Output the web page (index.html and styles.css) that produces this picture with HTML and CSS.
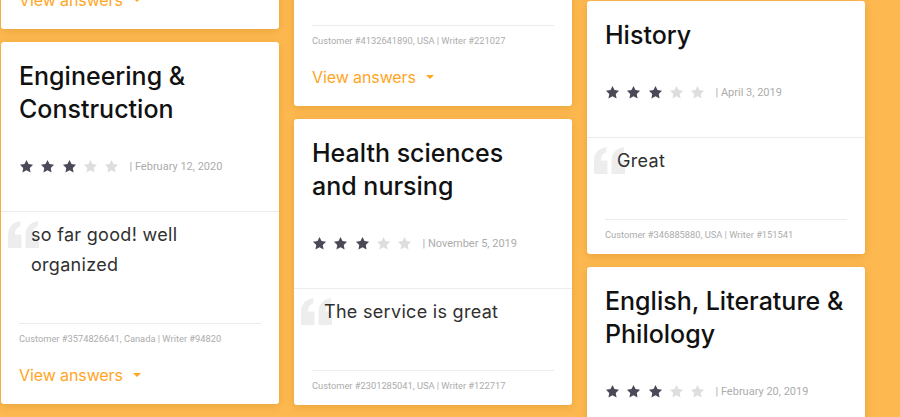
FILE: index.html
```html
<!DOCTYPE html>
<html lang="en">
<head>
<meta charset="utf-8">
<title>Reviews</title>
<link rel="stylesheet" href="styles.css">
</head>
<body>
<svg width="0" height="0" class="defs" aria-hidden="true">
  <defs>
    <symbol id="star" viewBox="0 0 24 24"><path d="M12 1.5l3.2 6.6 7.3 1-5.3 5.1 1.3 7.2L12 18l-6.5 3.4 1.3-7.2L1.5 9.1l7.3-1z"/></symbol>
    <symbol id="quote" viewBox="0 0 30 26"><path d="M0 26V14C0 6 4 1.5 12 0v5C8.5 6 6.8 9 6.8 13H13v13z M17 26V14c0-8 4-12.5 12-14v5c-3.5 1-5.2 4-5.2 8H30v13z"/></symbol>
  </defs>
</svg>
<main class="board">
  <section class="col col-1">
    <article class="card">
      <div class="card-head">
        <h3 class="title">Business Studies</h3>
        <div class="rating">
          <svg class="star on"><use href="#star"/></svg><svg class="star on"><use href="#star"/></svg><svg class="star on"><use href="#star"/></svg><svg class="star"><use href="#star"/></svg><svg class="star"><use href="#star"/></svg>
          <span class="date">| March 2, 2020</span>
        </div>
      </div>
      <div class="card-review">
        <svg class="qmark"><use href="#quote"/></svg>
        <p>Good job</p>
      </div>
      <div class="card-foot">
        <p class="meta">Customer #1200341200, USA | Writer #100201</p>
        <a class="view" href="#">View answers <span class="caret"></span></a>
      </div>
    </article>
    <article class="card">
      <div class="card-head">
        <h3 class="title">Engineering &amp; Construction</h3>
        <div class="rating">
          <svg class="star on"><use href="#star"/></svg><svg class="star on"><use href="#star"/></svg><svg class="star on"><use href="#star"/></svg><svg class="star"><use href="#star"/></svg><svg class="star"><use href="#star"/></svg>
          <span class="date">| February 12, 2020</span>
        </div>
      </div>
      <div class="card-review">
        <svg class="qmark"><use href="#quote"/></svg>
        <p>so far good! well organized</p>
      </div>
      <div class="card-foot">
        <p class="meta">Customer #3574826641, Canada | Writer #94820</p>
        <a class="view" href="#">View answers <span class="caret"></span></a>
      </div>
    </article>
  </section>

  <section class="col col-2">
    <article class="card">
      <div class="card-head">
        <h3 class="title">Economics</h3>
        <div class="rating">
          <svg class="star on"><use href="#star"/></svg><svg class="star on"><use href="#star"/></svg><svg class="star on"><use href="#star"/></svg><svg class="star"><use href="#star"/></svg><svg class="star"><use href="#star"/></svg>
          <span class="date">| January 8, 2020</span>
        </div>
      </div>
      <div class="card-review">
        <svg class="qmark"><use href="#quote"/></svg>
        <p>Nice work</p>
      </div>
      <div class="card-foot">
        <p class="meta">Customer #4132641890, USA | Writer #221027</p>
        <a class="view" href="#">View answers <span class="caret"></span></a>
      </div>
    </article>
    <article class="card">
      <div class="card-head">
        <h3 class="title">Health sciences <span class="nowrap">and nursing</span></h3>
        <div class="rating">
          <svg class="star on"><use href="#star"/></svg><svg class="star on"><use href="#star"/></svg><svg class="star on"><use href="#star"/></svg><svg class="star"><use href="#star"/></svg><svg class="star"><use href="#star"/></svg>
          <span class="date">| November 5, 2019</span>
        </div>
      </div>
      <div class="card-review">
        <svg class="qmark"><use href="#quote"/></svg>
        <p>The service is great</p>
      </div>
      <div class="card-foot">
        <p class="meta">Customer #2301285041, USA | Writer #122717</p>
      </div>
    </article>
  </section>

  <section class="col col-3">
    <article class="card">
      <div class="card-head">
        <h3 class="title">History</h3>
        <div class="rating">
          <svg class="star on"><use href="#star"/></svg><svg class="star on"><use href="#star"/></svg><svg class="star on"><use href="#star"/></svg><svg class="star"><use href="#star"/></svg><svg class="star"><use href="#star"/></svg>
          <span class="date">| April 3, 2019</span>
        </div>
      </div>
      <div class="card-review">
        <svg class="qmark"><use href="#quote"/></svg>
        <p>Great</p>
      </div>
      <div class="card-foot">
        <p class="meta">Customer #346885880, USA | Writer #151541</p>
      </div>
    </article>
    <article class="card">
      <div class="card-head">
        <h3 class="title">English, Literature &amp; Philology</h3>
        <div class="rating">
          <svg class="star on"><use href="#star"/></svg><svg class="star on"><use href="#star"/></svg><svg class="star on"><use href="#star"/></svg><svg class="star"><use href="#star"/></svg><svg class="star"><use href="#star"/></svg>
          <span class="date">| February 20, 2019</span>
        </div>
      </div>
      <div class="card-review">
        <svg class="qmark"><use href="#quote"/></svg>
        <p>Very good</p>
      </div>
      <div class="card-foot">
        <p class="meta">Customer #310045512, USA | Writer #110432</p>
      </div>
    </article>
  </section>
</main>
</body>
</html>
```

FILE: styles.css
```css
* { box-sizing: border-box; }
html, body { margin: 0; padding: 0; }
body {
  background: #fdb94f;
  height: 417px;
  overflow: hidden;
  font-family: "Inter", "Open Sans", sans-serif;
}
.defs { position: absolute; width: 0; height: 0; overflow: hidden; }

.board {
  display: flex;
  align-items: flex-start;
  gap: 15px;
  padding-left: 1px;
}
.col {
  width: 278px;
  display: flex;
  flex-direction: column;
  gap: 13px;
}
.col-1 { margin-top: -270px; }
.col-2 { margin-top: -193px; }
.col-3 { margin-top: 1px; }

.card {
  background: #fff;
  border-radius: 3px;
  box-shadow: 0 2px 9px rgba(160, 90, 0, 0.22);
}

.card-head { padding: 18px 18px 37px; }
.title {
  margin: 0;
  font-weight: 500;
  font-size: 25px;
  line-height: 33px;
  color: #111;
  letter-spacing: 0;
}
.nowrap { white-space: nowrap; }
.rating {
  margin-top: 32px;
  height: 16px;
  display: flex;
  align-items: center;
}
.star {
  width: 15px;
  height: 15px;
  fill: #dedede;
  margin-right: 6.3px;
}
.star.on { fill: #4a4958; }
.date {
  margin-left: 4px;
  font-family: "Roboto", sans-serif;
  font-size: 11px;
  color: #acacac;
}

.card-review {
  position: relative;
  border-top: 1px solid #ececec;
  padding: 8px 18px 43px 30px;
}
.card-review p {
  position: relative;
  margin: 0;
  font-size: 18px;
  line-height: 30px;
  font-weight: 400;
  letter-spacing: 0.3px;
  color: #303030;
}
.qmark {
  position: absolute;
  left: 7px;
  top: 9px;
  width: 31px;
  height: 27px;
  fill: #ededed;
}

.card-foot { padding: 0 18px 12px; }
.meta {
  margin: 0;
  border-top: 1px solid #ececec;
  padding-top: 8px;
  font-family: "Roboto", sans-serif;
  font-size: 9.3px;
  line-height: 14px;
  color: #acacac;
}
.view {
  display: flex;
  align-items: center;
  margin-top: 17px;
  margin-bottom: 5px;
  height: 24px;
  font-size: 16px;
  letter-spacing: -0.1px;
  color: #ffa51f;
  text-decoration: none;
}
.caret {
  margin-left: 10px;
  width: 0;
  height: 0;
  border-left: 4px solid transparent;
  border-right: 4px solid transparent;
  border-top: 4px solid #ffa51f;
}
```
